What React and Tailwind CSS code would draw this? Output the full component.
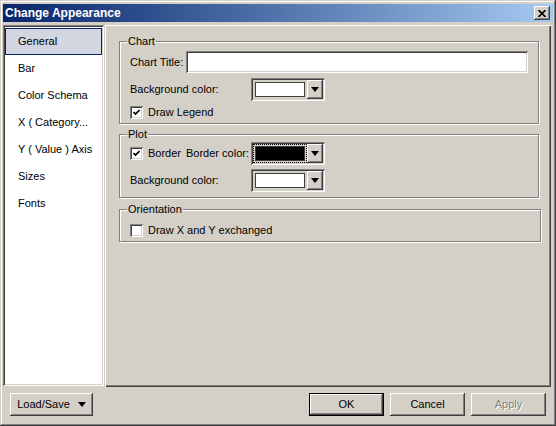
import React from 'react';

const raised = 'shadow-[inset_-1px_-1px_0_#404040,inset_1px_1px_0_#ffffff,inset_-2px_-2px_0_#808080,inset_2px_2px_0_#d4d0c8]';
const sunken = 'shadow-[inset_1px_1px_0_#808080,inset_-1px_-1px_0_#ffffff,inset_2px_2px_0_#404040,inset_-2px_-2px_0_#d4d0c8]';

const Triangle = () => (
    <svg width="8" height="5" viewBox="0 0 8 5">
        <polygon points="0,0 8,0 4,5" fill="#000" />
    </svg>
);

const Checkbox = ({ checked }) => (
    <div className={`w-[13px] h-[13px] bg-white flex items-center justify-center shrink-0 ${sunken}`}>
        {checked && (
            <svg width="7" height="7" viewBox="0 0 7 7">
                <path d="M0.5 3 L2.5 5 L6.5 1" stroke="#000" strokeWidth="1.7" fill="none" />
            </svg>
        )}
    </div>
);

const ColorCombo = ({ color, focused }) => (
    <div className={`w-[74px] h-[23px] bg-[#d4d0c8] flex items-center p-[2px] shrink-0 ${sunken}`}>
        <div className="flex-1 h-full flex items-center pl-[2px]">
            <div
                className={`w-[50px] h-[15px] border border-[#404040] ${focused ? 'outline-1 outline-dotted outline-offset-[1px] outline-black' : ''}`}
                style={{ backgroundColor: color }}
            />
        </div>
        <div className={`w-[16px] h-full flex items-center justify-center ${raised}`}>
            <Triangle />
        </div>
    </div>
);

const Group = ({ title, className, children }) => (
    <fieldset className={`border border-[#808080] pl-[10px] pr-[9px] shadow-[inset_1px_1px_0_#ffffff,1px_1px_0_#ffffff] ${className}`}>
        <legend className="-ml-[3px] px-[1px] leading-[14px] bg-[#d4d0c8]">{title}</legend>
        {children}
    </fieldset>
);

const Button = ({ children, className = '', disabled, isDefault }) => (
    <div className={`h-[23px] flex items-center justify-center bg-[#d4d0c8] ${isDefault ? 'border border-black' : ''} ${className}`}>
        <div className={`w-full h-full flex items-center justify-center ${raised} ${disabled ? 'text-[#808080] [text-shadow:1px_1px_0_#ffffff]' : ''}`}>
            {children}
        </div>
    </div>
);

const items = ['General', 'Bar', 'Color Schema', 'X ( Category...', 'Y ( Value ) Axis', 'Sizes', 'Fonts'];

export default function App() {
    return (
        <div className="w-[556px] h-[426px] bg-[#d4d0c8] pt-[4px] px-[3px] pb-[3px] flex flex-col font-['Liberation_Sans',Arial,sans-serif] text-[11px] text-black shadow-[inset_-1px_-1px_0_#404040,inset_1px_1px_0_#d4d0c8,inset_-2px_-2px_0_#808080,inset_2px_2px_0_#ffffff]">
            {/* title bar */}
            <div className="h-[18px] flex items-center justify-between bg-gradient-to-r from-[#0a246a] to-[#a6caf0] pl-[2px] pr-[3px]">
                <span className="text-white font-bold text-[12px]">Change Appearance</span>
                <div className={`w-[16px] h-[14px] bg-[#d4d0c8] flex items-center justify-center ${raised}`}>
                    <svg width="8" height="7" viewBox="0 0 8 7">
                        <path d="M0.5 0 L7.5 7 M7.5 0 L0.5 7" stroke="#000" strokeWidth="1.6" />
                    </svg>
                </div>
            </div>

            <div className="mt-[3px] h-[362px] flex">
                {/* sidebar list */}
                <div className={`w-[101px] h-[361px] bg-white p-[2px] pt-[3px] ${sunken}`}>
                    {items.map((item, i) => (
                        <div
                            key={item}
                            className={`h-[27px] flex items-center pl-[12px] border ${i === 0 ? 'bg-[#d3d6e1] border-[#0a246a]' : 'border-transparent'}`}
                        >
                            {item}
                        </div>
                    ))}
                </div>

                {/* settings panel */}
                <div className="flex-1 ml-[1px] mr-[2px] pl-[14px] pt-[9px] shadow-[inset_1px_1px_0_#ffffff,inset_-1px_-1px_0_#404040,inset_-2px_-2px_0_#808080]">
                    <Group title="Chart" className="w-[420px] h-[90px]">
                        <div className="pt-[3px]">
                            <div className="flex items-center h-[22px]">
                                <span className="w-[56px]">Chart Title:</span>
                                <div className={`flex-1 mr-[1px] h-[22px] bg-white ${sunken}`} />
                            </div>
                            <div className="flex items-center mt-[5px]">
                                <span className="w-[121px]">Background color:</span>
                                <ColorCombo color="#ffffff" />
                            </div>
                            <div className="flex items-center mt-[3px] gap-[5px]">
                                <Checkbox checked />
                                <span>Draw Legend</span>
                            </div>
                        </div>
                    </Group>

                    <Group title="Plot" className="w-[420px] h-[71px] mt-[3px]">
                        <div className="pt-[1px]">
                            <div className="flex items-center">
                                <Checkbox checked />
                                <span className="w-[38px] ml-[5px]">Border</span>
                                <span className="w-[65px]">Border color:</span>
                                <ColorCombo color="#000000" focused />
                            </div>
                            <div className="flex items-center mt-[4px]">
                                <span className="w-[121px]">Background color:</span>
                                <ColorCombo color="#ffffff" />
                            </div>
                        </div>
                    </Group>

                    <Group title="Orientation" className="w-[422px] h-[40px] mt-[4px]">
                        <div className="pt-[6px] flex items-center gap-[5px]">
                            <Checkbox />
                            <span>Draw X and Y exchanged</span>
                        </div>
                    </Group>
                </div>
            </div>

            {/* bottom buttons */}
            <div className="flex items-start pt-[6px] pl-[7px] pr-[7px]">
                <Button className="w-[83px]">
                    <span className="mr-[8px]">Load/Save</span>
                    <Triangle />
                </Button>
                <div className="ml-auto flex gap-[6px]">
                    <Button className="w-[75px]" isDefault>OK</Button>
                    <Button className="w-[75px]">Cancel</Button>
                    <Button className="w-[75px]" disabled>Apply</Button>
                </div>
            </div>
        </div>
    );
}
